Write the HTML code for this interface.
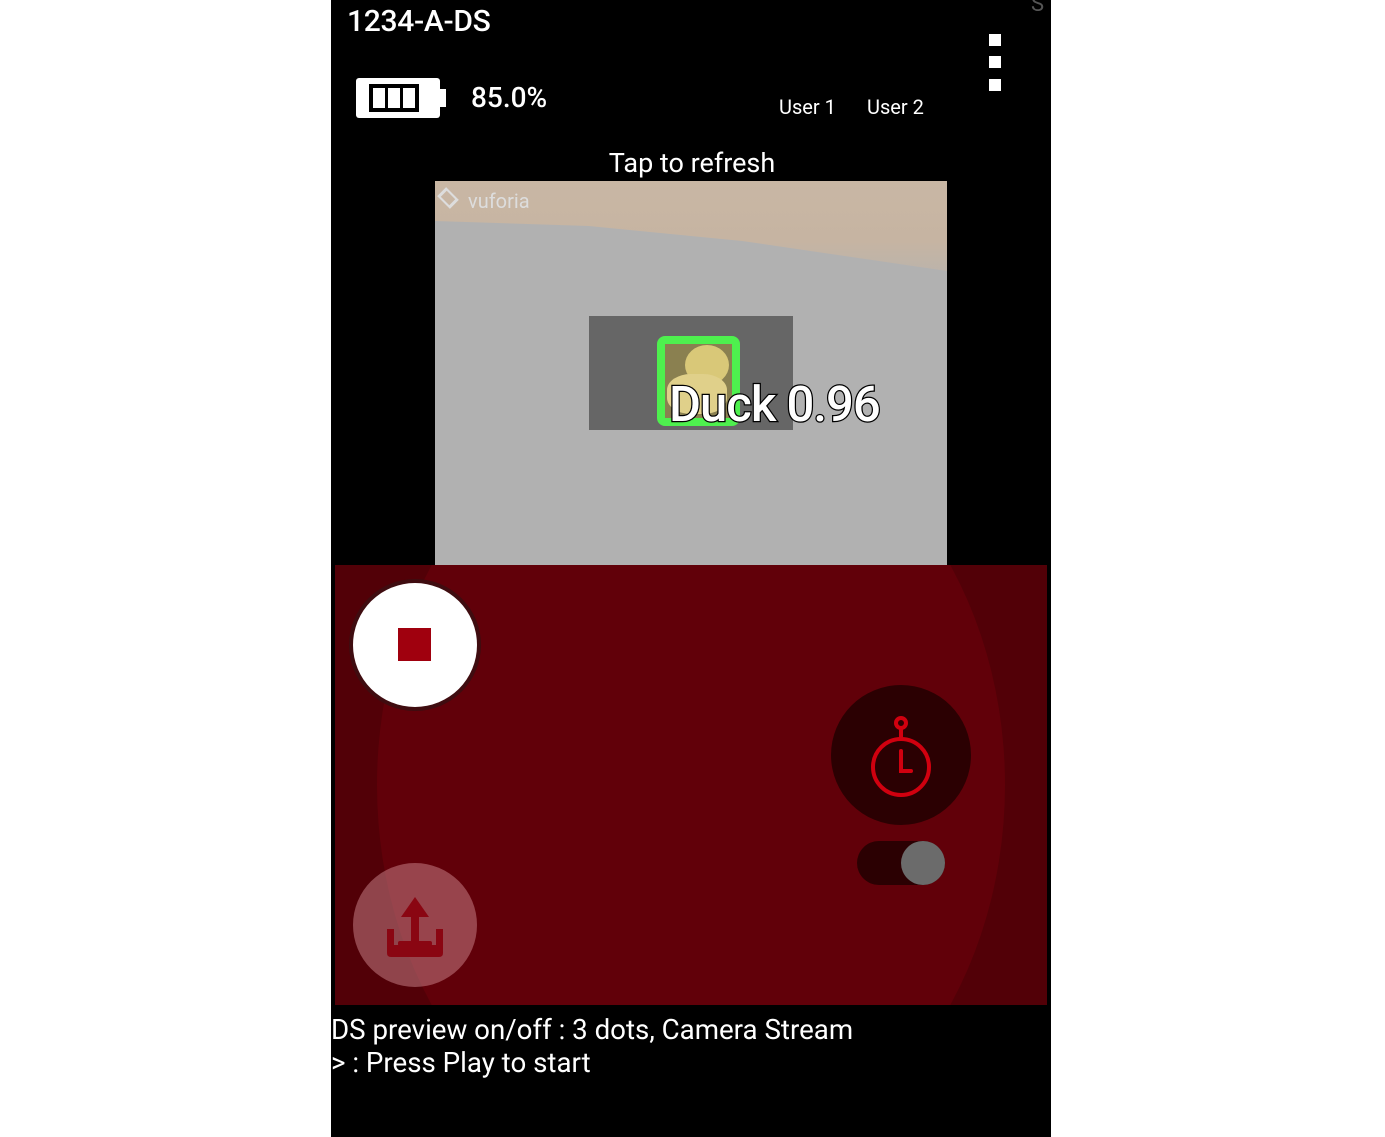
<!DOCTYPE html>
<html><head><meta charset="utf-8"><style>
*{margin:0;padding:0;box-sizing:border-box}
html,body{width:1385px;height:1137px;background:#fff;overflow:hidden}
body{font-family:"Roboto","Liberation Sans",sans-serif;position:relative}
#app{position:absolute;left:331px;top:0;width:720px;height:1137px;background:#000;overflow:hidden;color:#fff}
.abs{position:absolute}
</style></head><body>
<div id="app">
  <div class="abs" style="left:16px;top:4px;font-size:30px;font-weight:500;letter-spacing:-0.3px">1234-A-DS</div>
  <div class="abs" style="left:700px;top:-8px;font-size:22px;color:#555">S</div>
  <!-- battery -->
  <div class="abs" style="left:25px;top:78px;width:84px;height:40px;background:#fff;border-radius:3px"></div>
  <div class="abs" style="left:109px;top:89px;width:6px;height:18px;background:#fff"></div>
  <div class="abs" style="left:38px;top:84px;width:50px;height:28px;background:#000"></div>
  <div class="abs" style="left:42px;top:88px;width:12px;height:20px;background:#fff"></div>
  <div class="abs" style="left:57px;top:88px;width:12px;height:20px;background:#fff"></div>
  <div class="abs" style="left:72px;top:88px;width:12px;height:20px;background:#fff"></div>
  <div class="abs" style="left:140px;top:81px;font-size:28px;font-weight:500">85.0%</div>
  <div class="abs" style="left:448px;top:95px;font-size:20px">User 1</div>
  <div class="abs" style="left:536px;top:95px;font-size:20px">User 2</div>
  <div class="abs" style="left:658px;top:34px;width:12px;height:12px;background:#fff"></div>
  <div class="abs" style="left:658px;top:56px;width:12px;height:12px;background:#fff"></div>
  <div class="abs" style="left:658px;top:79px;width:12px;height:12px;background:#fff"></div>
  <div class="abs" style="left:0;width:720px;top:147px;text-align:center;font-size:27px;padding-left:2px">Tap to refresh</div>
  <!-- camera -->
  <div class="abs" style="left:104px;top:181px;width:512px;height:384px;background:#b1b1b1;overflow:hidden">
    <div class="abs" style="left:0;top:0;width:512px;height:100px;background:linear-gradient(180deg,#c9b7a4,#c6b4a2 60%,#b9b3ad);clip-path:polygon(0 0,100% 0,100% 90%,60% 60%,30% 45%,0 40%)"></div>
    <div class="abs" style="left:4px;top:8px;width:18px;height:18px;border:3px solid #ddd;transform:rotate(45deg) scaleY(.7)"></div>
    <div class="abs" style="left:33px;top:8px;font-size:20px;color:#ddd">vuforia</div>
    <div class="abs" style="left:154px;top:135px;width:204px;height:114px;background:#666"></div>
    <div class="abs" style="left:222px;top:155px;width:83px;height:90px;border:8px solid #4ef04e;border-radius:8px;background:#8a8050"></div>
    <div class="abs" style="left:250px;top:164px;width:44px;height:40px;border-radius:50%;background:#d9c878"></div>
    <div class="abs" style="left:232px;top:193px;width:60px;height:40px;border-radius:40%;background:#e0d08a"></div>
    <div class="abs" style="left:234px;top:199px;font-size:49px;font-weight:500;color:#fff;-webkit-text-stroke:2.5px #000;paint-order:stroke fill;letter-spacing:-1px;line-height:1">Duck 0.96</div>
  </div>
  <!-- red panel -->
  <div class="abs" style="left:4px;top:565px;width:712px;height:440px;background:#520007;overflow:hidden">
    <div class="abs" style="left:42px;top:-170px;width:628px;height:780px;border-radius:50%;background:#610009"></div>
    <div class="abs" style="left:14px;top:14px;width:132px;height:132px;border-radius:50%;background:#3f0c10"></div>
    <div class="abs" style="left:18px;top:18px;width:124px;height:124px;border-radius:50%;background:#fff"></div>
    <div class="abs" style="left:63px;top:63px;width:33px;height:33px;background:#a0000e"></div>
    <div class="abs" style="left:496px;top:120px;width:140px;height:140px;border-radius:50%;background:#2b0002"></div>
    <svg class="abs" style="left:530px;top:148px" width="72" height="90" viewBox="0 0 72 90"><g fill="none" stroke="#d0000f" stroke-width="4" stroke-linecap="round"><circle cx="36" cy="10" r="5"/><line x1="36" y1="15" x2="36" y2="25"/><circle cx="36" cy="54" r="28"/><path d="M36 38v20h10"/></g></svg>
    <div class="abs" style="left:522px;top:276px;width:88px;height:44px;border-radius:22px;background:#2b0002"></div>
    <div class="abs" style="left:566px;top:276px;width:44px;height:44px;border-radius:50%;background:#6b6b6b"></div>
    <div class="abs" style="left:18px;top:298px;width:124px;height:124px;border-radius:50%;background:rgba(220,150,160,.45)"></div>
    <svg class="abs" style="left:50px;top:330px" width="60" height="64" viewBox="0 0 60 64"><g fill="#8a0612"><path d="M30 2 L44 22 H34 V46 H26 V22 H16 Z"/><path d="M2 34 h7 v16 h42 v-16 h7 v24 q0 4 -4 4 h-48 q-4 0 -4 -4 Z"/><rect x="13" y="46" width="34" height="5" rx="2"/></g></svg>
  </div>
  <div class="abs" style="left:0;top:1013px;font-size:27.7px;line-height:33px;white-space:nowrap">DS preview on/off : 3 dots, Camera Stream<br>&gt; : Press Play to start</div>
</div>
</body></html>
